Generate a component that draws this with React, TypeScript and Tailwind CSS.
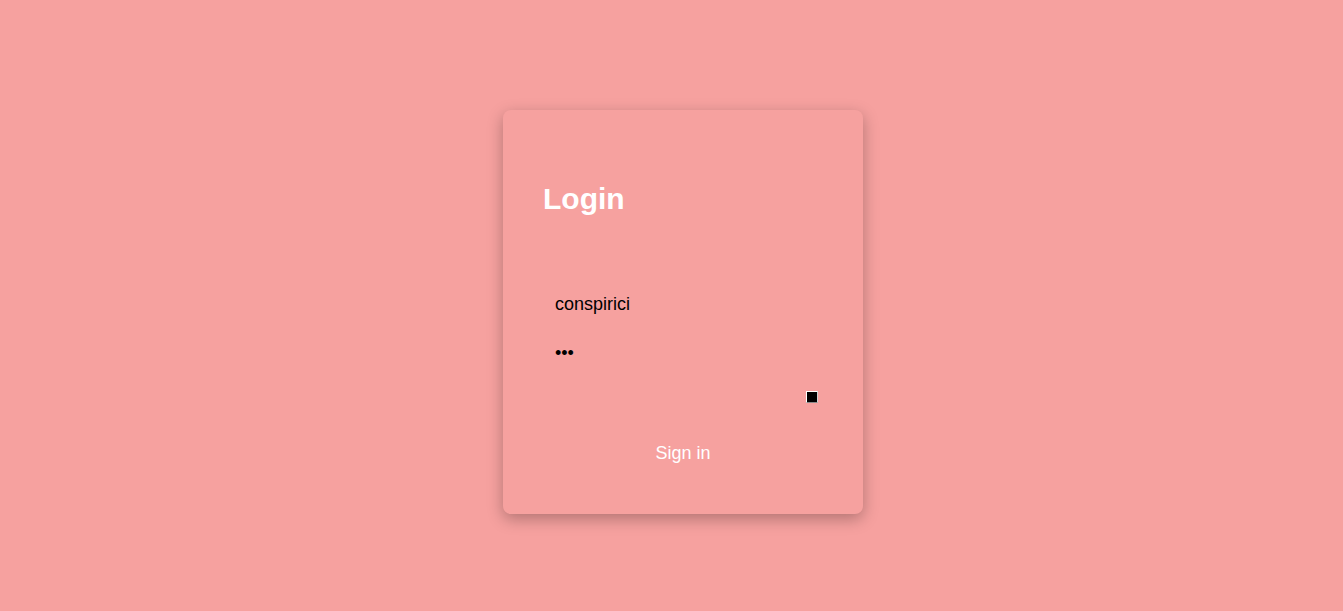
import React from "react";

const App = () => {
  return (
    <div className="min-h-[611px] w-full bg-[#f6a19f] flex justify-center pl-[23px] pt-[110px] font-['Liberation_Sans',Arial,sans-serif]">
      <form
        onSubmit={(e) => e.preventDefault()}
        className="w-[360px] h-[404px] rounded-lg bg-[#f6a19f] shadow-[0_5px_16px_rgba(0,0,0,0.28)] px-10 pt-[71px] flex flex-col"
      >
        <h1 className="text-[30px] leading-[36px] font-bold text-white">Login</h1>

        {/* Inputs */}
        <input
          type="text"
          readOnly
          value="conspirici"
          className="mt-[67px] h-[40px] px-3 bg-transparent outline-none text-[18px] text-black"
        />
        <input
          type="password"
          readOnly
          value="abc"
          className="mt-[9px] h-[40px] px-3 bg-transparent outline-none text-[18px] text-black"
        />

        <div className="mt-[18px] flex justify-end pr-[5px]">
          <span className="block w-[12px] h-[12px] bg-black border border-white border-b-[#8a8a8a] border-r-[#d0d0d0]" />
        </div>

        <button type="submit" className="mt-[30px] h-[40px] w-full text-[18px] text-white bg-transparent">
          Sign in
        </button>
      </form>
    </div>
  );
};

export default App;
